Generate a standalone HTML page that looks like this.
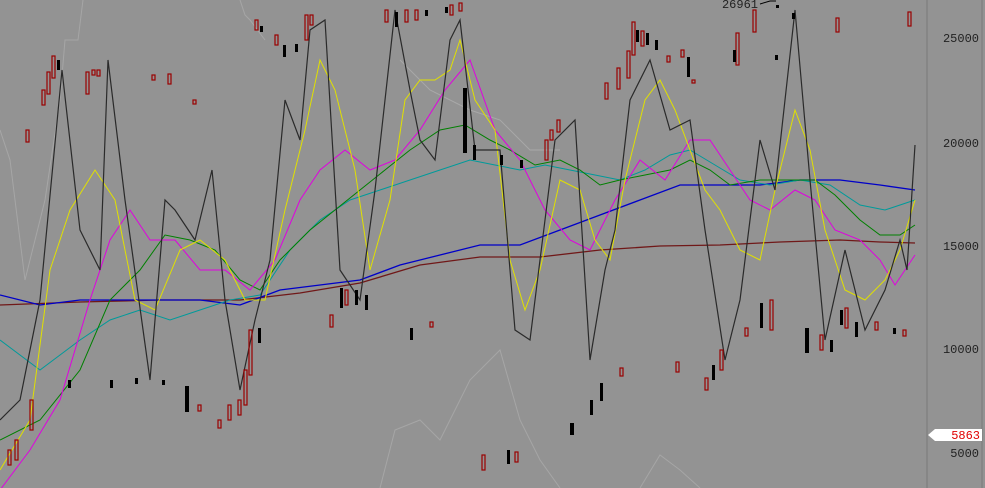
<!DOCTYPE html>
<html><head><meta charset="utf-8"><style>
html,body{margin:0;padding:0;background:#939393;overflow:hidden}
svg{display:block}
text{font-family:"Liberation Mono","DejaVu Sans Mono",monospace;font-size:12px}
</style></head><body>
<svg width="985" height="488" viewBox="0 0 985 488" xmlns="http://www.w3.org/2000/svg">
<rect width="985" height="488" fill="#939393"/>
<g fill="none" stroke-width="1">
<polyline stroke="#a6a6a6" points="0,130 10,160 25,280 45,200 60,100 65,40 78,40 83,0"/>
<polyline stroke="#a6a6a6" points="240,0 245,15 250,20 265,40"/>
<polyline stroke="#a6a6a6" points="380,488 395,430 420,420 440,440 470,380 500,350 520,420 540,460 560,488"/>
<polyline stroke="#a6a6a6" points="640,488 660,455 680,470 700,488"/>
<polyline stroke="#a8a8a8" points="400,60 430,90 470,110 500,120 530,150 560,150"/>
<polyline stroke="#701818" stroke-width="1.3" points="0,305 80,302 160,300 240,300 300,293 360,283 420,265 480,257 540,257 600,250 660,246 720,245 780,242 840,240 880,242 915,243"/>
<polyline stroke="#0000c8" stroke-width="1.3" points="0,295 40,305 80,300 120,300 160,300 200,300 240,305 280,290 320,285 360,280 400,265 440,255 480,245 520,245 560,230 600,215 640,200 680,185 720,185 760,185 800,180 840,180 880,185 915,190"/>
<polyline stroke="#009a9a" points="0,340 40,370 80,340 110,320 140,310 170,320 200,310 230,300 260,295 290,250 320,220 350,200 380,190 410,180 440,170 470,160 495,165 520,170 545,165 570,170 595,175 620,180 645,170 670,155 690,150 715,165 740,180 770,185 800,180 830,185 860,205 885,210 915,200"/>
<polyline stroke="#008000" points="0,440 40,420 80,370 110,300 140,270 165,235 190,240 215,250 240,280 260,290 280,260 310,230 335,210 360,190 385,170 410,150 440,130 465,125 490,140 510,150 535,165 560,160 580,170 600,185 620,180 645,175 670,170 690,160 710,170 730,185 760,180 790,180 815,180 835,195 860,220 880,235 900,235 915,225"/>
<polyline stroke="#e000e0" points="0,490 30,450 60,400 90,300 110,240 130,210 150,240 175,240 200,270 225,270 250,290 275,260 300,200 320,170 345,150 370,170 395,160 420,130 445,90 470,60 495,130 520,160 545,210 570,240 590,250 615,200 640,160 665,180 690,140 710,140 730,170 750,200 770,210 795,190 815,200 835,230 860,240 880,260 895,285 915,255"/>
<polyline stroke="#e0e000" points="0,470 30,420 50,270 70,210 95,170 115,200 135,300 155,310 180,250 200,240 225,260 245,300 265,300 285,210 305,130 320,60 335,90 355,170 370,270 390,200 405,100 420,80 435,80 450,70 460,40 475,100 495,130 510,260 525,310 540,270 560,180 580,190 595,240 610,260 625,180 645,100 660,80 675,110 690,150 705,190 720,210 740,250 760,260 775,190 795,110 810,150 825,230 845,290 865,300 885,280 900,250 915,200"/>
<polyline stroke="#2a2a2a" stroke-width="1.2" points="0,420 20,400 40,300 62,70 80,230 100,270 108,60 125,200 150,380 165,200 175,210 195,240 212,170 225,300 240,390 255,320 270,260 285,100 300,140 310,30 325,20 340,270 360,300 375,190 395,10 410,90 420,140 435,160 450,40 460,20 475,150 500,150 515,330 530,340 555,140 575,120 590,360 605,270 615,230 630,100 650,60 670,130 690,120 705,230 725,360 740,300 760,140 775,190 795,10 810,180 825,340 845,250 865,330 885,290 900,240 907,270 915,145"/>
</g>
<g fill="none" stroke="#9a0000" stroke-width="1.2">
<rect x="26" y="130" width="3" height="12"/><rect x="42" y="90" width="3" height="15"/><rect x="47" y="72" width="3" height="22"/><rect x="52" y="56" width="3" height="22"/><rect x="86" y="72" width="3" height="22"/><rect x="92" y="70" width="3" height="5"/><rect x="97" y="70" width="3" height="6"/>
<rect x="152" y="75" width="3" height="5"/><rect x="168" y="74" width="3" height="10"/><rect x="193" y="100" width="3" height="4"/>
<rect x="255" y="20" width="3" height="10"/><rect x="275" y="35" width="3" height="10"/><rect x="305" y="15" width="3" height="25"/><rect x="310" y="15" width="3" height="10"/>
<rect x="385" y="10" width="3" height="12"/><rect x="405" y="10" width="3" height="12"/><rect x="415" y="10" width="3" height="10"/><rect x="450" y="5" width="3" height="10"/><rect x="459" y="3" width="3" height="8"/>
<rect x="605" y="83" width="3" height="16"/><rect x="617" y="68" width="3" height="21"/><rect x="627" y="51" width="3" height="27"/><rect x="632" y="22" width="3" height="33"/><rect x="641" y="31" width="3" height="15"/><rect x="667" y="56" width="3" height="6"/><rect x="681" y="50" width="3" height="7"/><rect x="692" y="80" width="3" height="3"/>
<rect x="736" y="33" width="3" height="32"/><rect x="753" y="10" width="3" height="22"/><rect x="836" y="18" width="3" height="14"/><rect x="908" y="12" width="3" height="14"/>
<rect x="557" y="120" width="3" height="12"/><rect x="550" y="130" width="3" height="10"/><rect x="545" y="140" width="3" height="20"/>
<rect x="8" y="450" width="3" height="15"/><rect x="15" y="440" width="3" height="20"/><rect x="30" y="400" width="3" height="30"/><rect x="218" y="420" width="3" height="8"/><rect x="228" y="405" width="3" height="15"/><rect x="238" y="400" width="3" height="15"/><rect x="244" y="370" width="3" height="35"/><rect x="249" y="330" width="3" height="45"/>
<rect x="330" y="315" width="3" height="12"/><rect x="345" y="290" width="3" height="15"/><rect x="482" y="455" width="3" height="15"/><rect x="515" y="452" width="3" height="10"/><rect x="198" y="405" width="3" height="6"/><rect x="430" y="322" width="3" height="5"/>
<rect x="620" y="368" width="3" height="8"/><rect x="676" y="362" width="3" height="10"/><rect x="705" y="378" width="3" height="12"/><rect x="720" y="350" width="3" height="20"/><rect x="745" y="328" width="3" height="8"/><rect x="770" y="300" width="3" height="30"/><rect x="820" y="335" width="3" height="15"/><rect x="845" y="308" width="3" height="20"/><rect x="875" y="322" width="3" height="8"/><rect x="903" y="330" width="3" height="6"/>
</g>
<g fill="#000">
<rect x="57" y="60" width="3" height="10"/><rect x="283" y="45" width="3" height="12"/><rect x="295" y="44" width="3" height="8"/><rect x="260" y="26" width="3" height="6"/><rect x="395" y="12" width="3" height="15"/><rect x="425" y="10" width="3" height="6"/><rect x="445" y="7" width="3" height="6"/>
<rect x="636" y="30" width="3" height="12"/><rect x="646" y="33" width="3" height="12"/><rect x="655" y="40" width="3" height="10"/><rect x="687" y="57" width="3" height="20"/><rect x="733" y="50" width="3" height="12"/><rect x="776" y="5" width="3" height="3"/><rect x="792" y="13" width="3" height="6"/><rect x="775" y="55" width="3" height="5"/>
<rect x="463" y="88" width="4" height="65"/><rect x="473" y="145" width="3" height="15"/><rect x="500" y="155" width="3" height="10"/><rect x="520" y="160" width="3" height="8"/>
<rect x="185" y="386" width="4" height="26"/><rect x="68" y="380" width="3" height="8"/><rect x="110" y="380" width="3" height="8"/><rect x="135" y="378" width="3" height="6"/><rect x="162" y="380" width="3" height="5"/><rect x="258" y="328" width="3" height="15"/>
<rect x="340" y="288" width="3" height="20"/><rect x="355" y="290" width="3" height="15"/><rect x="365" y="295" width="3" height="15"/><rect x="410" y="328" width="3" height="12"/>
<rect x="570" y="423" width="4" height="12"/><rect x="590" y="400" width="3" height="15"/><rect x="600" y="383" width="3" height="18"/><rect x="507" y="450" width="3" height="14"/>
<rect x="712" y="365" width="3" height="15"/><rect x="760" y="303" width="3" height="25"/><rect x="805" y="328" width="4" height="25"/><rect x="830" y="340" width="3" height="12"/><rect x="840" y="310" width="3" height="15"/><rect x="855" y="322" width="3" height="15"/><rect x="893" y="328" width="3" height="6"/>
</g>
<line x1="927" y1="0" x2="927" y2="488" stroke="#7a7a7a"/>
<line x1="982" y1="0" x2="982" y2="488" stroke="#7a7a7a"/>
<g fill="#222" text-anchor="end">
<text x="979" y="42">25000</text><text x="979" y="147">20000</text><text x="979" y="250">15000</text><text x="979" y="353">10000</text><text x="979" y="457">5000</text>
<text x="758" y="8">26961</text>
</g>
<polyline points="760,4 770,1 776,1" fill="none" stroke="#000"/>
<polygon points="928,435 935,429 982,429 982,441 935,441" fill="#fff"/>
<text x="980" y="439" fill="#e00000" text-anchor="end">5863</text>
</svg>
</body></html>
